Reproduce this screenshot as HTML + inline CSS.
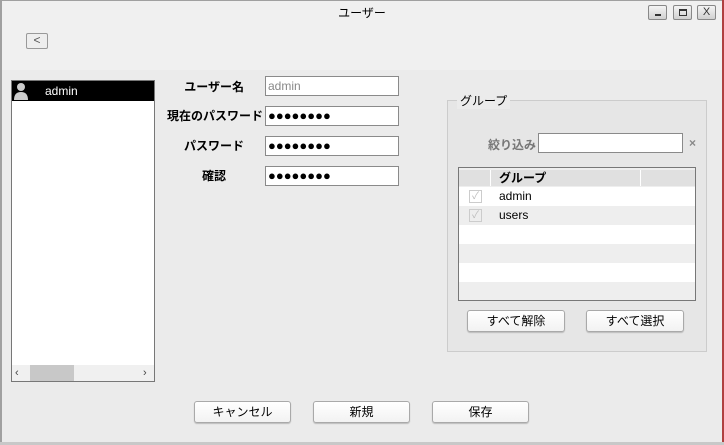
<!DOCTYPE html>
<html><head><meta charset="utf-8"><style>
*{box-sizing:border-box;margin:0;padding:0}
body{width:724px;height:445px;overflow:hidden;background:#ebebeb;font-family:"Liberation Sans","Noto Sans CJK JP",sans-serif;font-size:12px;color:#000;position:relative}
.a{position:absolute}
.lbl{position:absolute;font-weight:bold;font-size:12px;text-align:right;width:100px}
.in{position:absolute;background:#fff;border:1px solid #8a8a8a;height:20px;font-size:12px;padding-left:2px;line-height:18px}
.dots{font-size:13px;letter-spacing:0px;font-weight:bold}
.btn{position:absolute;background:linear-gradient(#fff,#f2f2f2);border:1px solid #a9a9a9;border-radius:3px;text-align:center;line-height:20px;font-size:12px;box-shadow:0 1px 1px #bbb}
.wb{position:absolute;top:5px;width:19px;height:15px;border:1px solid #888;background:linear-gradient(#f4f4f4,#d0d0d0);border-radius:2px}
</style></head><body>
<div class="a" style="left:0;top:0;width:724px;height:70px;background:#f0f0f0"></div>
<div class="a" style="left:0;top:0;width:2px;height:445px;background:#a0a0a0"></div>
<div class="a" style="left:0;top:0;width:724px;height:1px;background:#a0a0a0"></div>
<div class="a" style="left:722px;top:0;width:2px;height:445px;background:#b04040"></div>
<div class="a" style="left:0;top:442px;width:724px;height:3px;background:#c8c8c8"></div>
<div class="a" style="left:0;top:4px;width:724px;text-align:center;font-size:12px">ユーザー</div>
<div class="wb" style="left:648px"><div class="a" style="left:6px;top:8px;width:6px;height:2px;background:#333"></div></div>
<div class="wb" style="left:673px"><div class="a" style="left:5px;top:3px;width:8px;height:7px;border:1px solid #333;border-top-width:2px"></div></div>
<div class="wb" style="left:697px;font-size:11px;line-height:13px;text-align:center;color:#333">X</div>
<div class="a" style="left:26px;top:33px;width:22px;height:16px;border:1px solid #999;background:#eee;border-radius:2px;text-align:center;line-height:13px;color:#555">&lt;</div>

<div class="a" style="left:11px;top:80px;width:144px;height:302px;border:1px solid #777;background:#fff"></div>
<div class="a" style="left:12px;top:81px;width:142px;height:20px;background:#000;color:#fff;line-height:20px;padding-left:33px">admin</div>
<svg class="a" style="left:13px;top:82px" width="16" height="18"><circle cx="8" cy="5" r="4" fill="#ccc"/><path d="M1 18 Q1 10 8 10 Q15 10 15 18Z" fill="#ccc"/></svg>
<div class="a" style="left:12px;top:365px;width:142px;height:16px;background:#f0f0f0"></div>
<div class="a" style="left:30px;top:365px;width:44px;height:16px;background:#c8c8c8"></div>
<div class="a" style="left:15px;top:365px;font-size:11px;line-height:16px;color:#444">‹</div>
<div class="a" style="left:143px;top:365px;font-size:11px;line-height:16px;color:#444">›</div>

<div class="lbl" style="left:144px;top:78px">ユーザー名</div>
<div class="lbl" style="left:163px;top:107px">現在のパスワード</div>
<div class="lbl" style="left:144px;top:137px">パスワード</div>
<div class="lbl" style="left:126px;top:167px">確認</div>
<div class="in" style="left:265px;top:76px;width:134px;color:#888">admin</div>
<div class="in dots" style="left:265px;top:106px;width:134px">●●●●●●●●</div>
<div class="in dots" style="left:265px;top:136px;width:134px">●●●●●●●●</div>
<div class="in dots" style="left:265px;top:166px;width:134px">●●●●●●●●</div>

<div class="a" style="left:447px;top:100px;width:260px;height:252px;border:1px solid #ccc;background:#e6e6e6"></div>
<div class="a" style="left:457px;top:92px;background:#ebebeb;padding:0 3px;font-size:12px">グループ</div>
<div class="a" style="left:488px;top:136px;font-weight:bold;color:#777">絞り込み</div>
<div class="in" style="left:538px;top:133px;width:145px"></div>
<div class="a" style="left:689px;top:136px;color:#888;font-weight:bold">×</div>
<div class="a" style="left:458px;top:167px;width:238px;height:134px;border:1px solid #777;background:#eee">
<div class="a" style="left:0;top:2px;width:236px;height:16px;background:#e0e0e0"></div>
<div class="a" style="left:31px;top:2px;width:1px;height:16px;background:#fff"></div>
<div class="a" style="left:181px;top:2px;width:1px;height:16px;background:#fff"></div>
<div class="a" style="left:40px;top:2px;font-weight:bold;line-height:16px">グループ</div>
<div class="a" style="left:0;top:19px;width:236px;height:19px;background:#fff"></div>
<div class="a" style="left:0;top:57px;width:236px;height:19px;background:#fff"></div>
<div class="a" style="left:0;top:95px;width:236px;height:19px;background:#fff"></div>
<div class="a" style="left:40px;top:21px">admin</div>
<div class="a" style="left:40px;top:40px">users</div>
<div class="a" style="left:10px;top:22px;width:13px;height:13px;border:1px solid #ccc;color:#bbb;font-size:10px;line-height:11px;text-align:center">✓</div>
<div class="a" style="left:10px;top:41px;width:13px;height:13px;border:1px solid #ccc;color:#bbb;font-size:10px;line-height:11px;text-align:center">✓</div>
</div>
<div class="btn" style="left:467px;top:310px;width:98px">すべて解除</div>
<div class="btn" style="left:586px;top:310px;width:98px">すべて選択</div>

<div class="btn" style="left:194px;top:401px;width:97px">キャンセル</div>
<div class="btn" style="left:313px;top:401px;width:97px">新規</div>
<div class="btn" style="left:432px;top:401px;width:97px">保存</div>
</body></html>
